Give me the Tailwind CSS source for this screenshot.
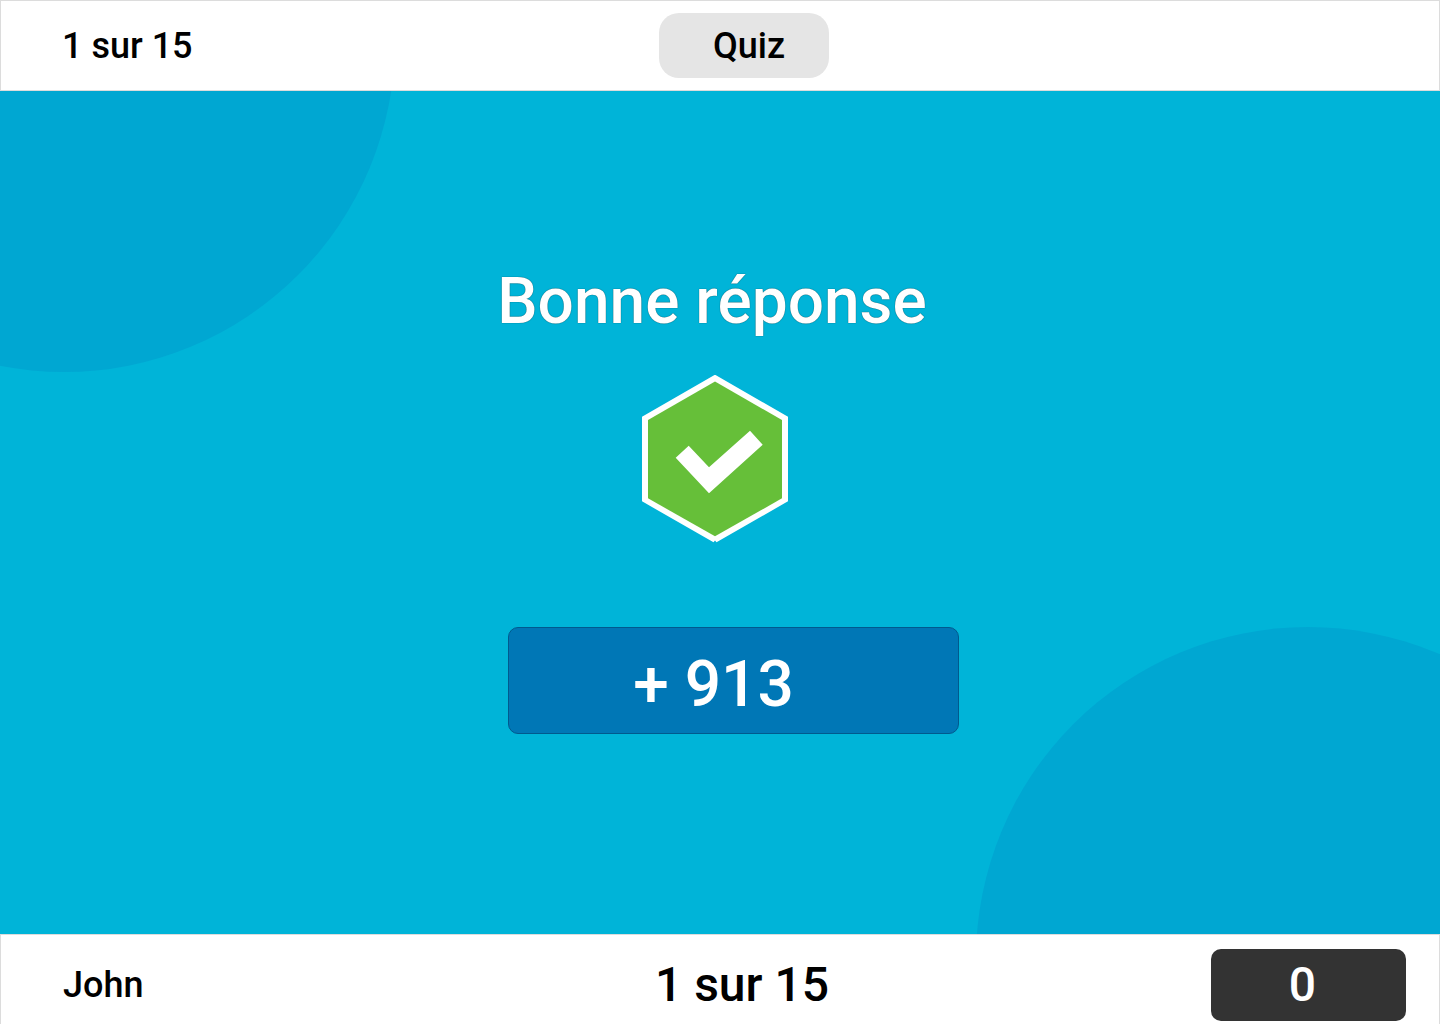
<!DOCTYPE html>
<html lang="fr">
<head>
<meta charset="utf-8">
<meta name="viewport" content="width=device-width, initial-scale=1">
<title>Quiz</title>
<script src="https://cdn.jsdelivr.net/npm/@tailwindcss/browser@4"></script>
</head>
<body class="flex min-h-screen flex-col bg-[#00b4d8] font-['Roboto',sans-serif] font-medium text-black">
  <header class="grid grid-cols-[1fr_auto_1fr] items-center border border-[#dcdcdc] bg-white py-3 pr-[13px] pl-[61px]">
    <p class="text-4xl">1 sur 15</p>
    <h1 class="flex h-[65px] w-[170px] items-center justify-center rounded-[20px] bg-[#e5e5e5] pl-[10px] text-4xl">Quiz</h1>
  </header>

  <main class="relative flex flex-1 flex-col items-center justify-center overflow-hidden pr-[10px] pb-7">
    <!-- Background circles -->
    <div class="absolute -top-[381px] -left-[267px] size-[662px] rounded-full bg-[#00a7d2]"></div>
    <div class="absolute -right-[200px] -bottom-[357px] size-[664px] rounded-full bg-[#00a7d2]"></div>

    <h2 class="relative pr-1.5 text-[64px] leading-[78px] text-white [text-shadow:0_0_1px_rgb(0_0_0/0.8)]">Bonne réponse</h2>

    <svg class="relative mt-[34px]" width="146" height="168" viewBox="0 0 146 168" role="img" aria-label="Bonne réponse">
      <path fill="#fff" d="M73 -.3 146 41.7V126.3L74.5 167.3 73 165.5 71.5 167.3 0 126.3V41.7Z"/>
      <path fill="#66bf39" d="M73 6.5 140 45V123.3L73 161.3 6 123.3V45Z"/>
      <path fill="#fff" d="M46.7 70.7 67 92.3 108 55.7 120.7 69.7 67 118.3 33.7 82.7Z"/>
    </svg>

    <p class="relative mt-[84px] ml-[37px] flex h-[107px] w-[451px] items-center justify-center rounded-[10px] border border-[#005a8e] bg-[#0077b6] pt-2 pr-10 text-[64px] leading-[78px] text-white">+ 913</p>
  </main>

  <footer class="grid grid-cols-[1fr_auto_1fr] items-center border-x border-t border-[#dcdcdc] bg-white pt-3.5 pr-[33px] pb-[3px] pl-[62px]">
    <p class="text-4xl">John</p>
    <p class="pl-[15px] text-5xl">1 sur 15</p>
    <p class="flex h-[72px] w-[195px] items-center justify-center justify-self-end rounded-[10px] bg-[#333] pr-3 text-5xl text-white">0</p>
  </footer>
</body>
</html>
